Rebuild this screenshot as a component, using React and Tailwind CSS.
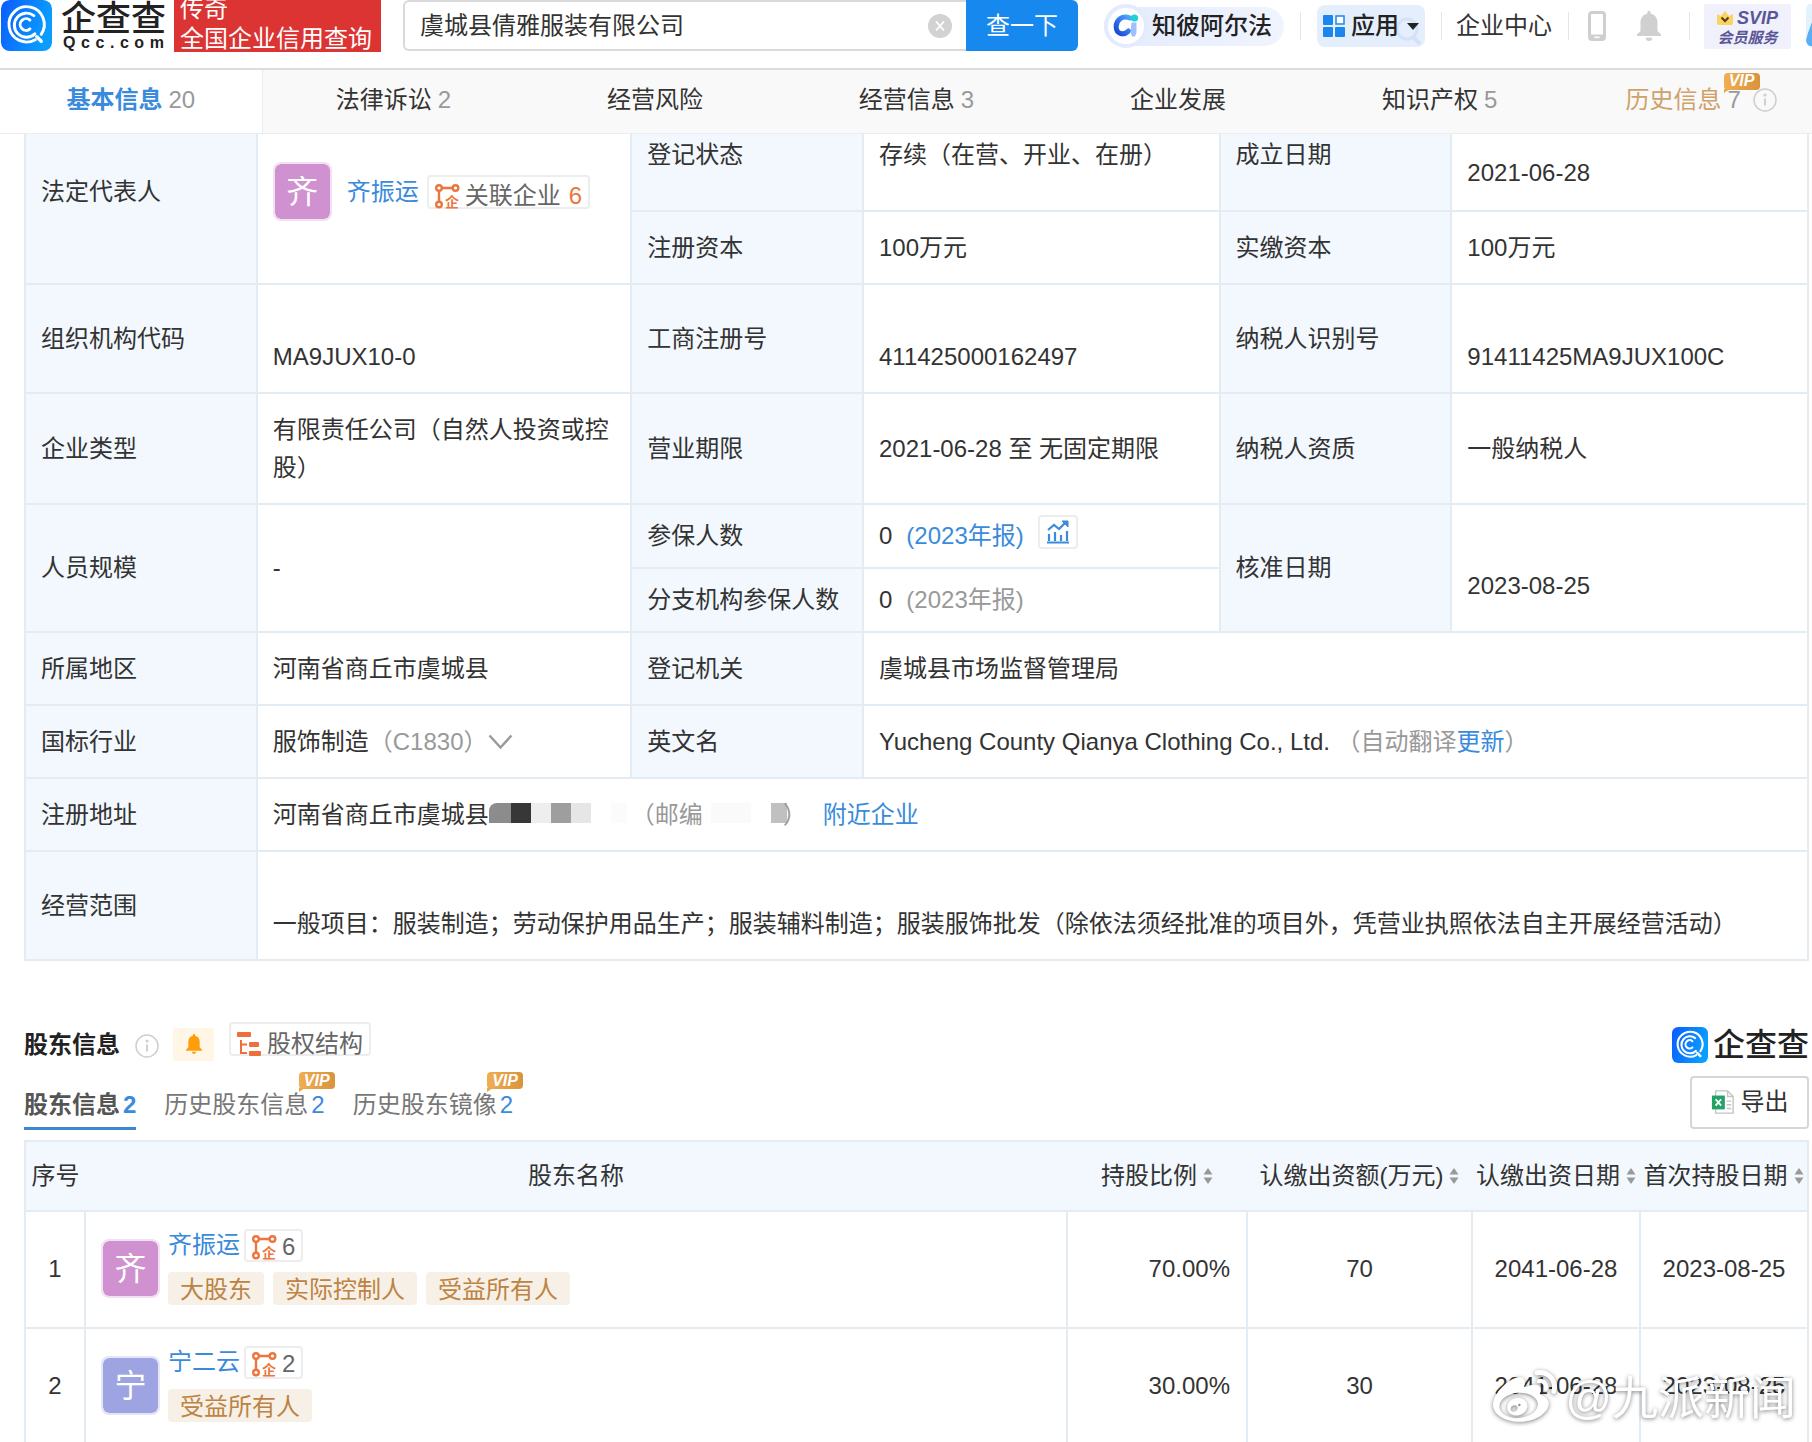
import React from "react";
import { FaWeibo } from "react-icons/fa";

const FONT = "font-['Liberation_Sans','Noto_Sans_CJK_SC',sans-serif]";

function LogoMark({ className }) {
  return (
    <svg viewBox="0 0 52 52" className={className} aria-hidden="true">
      <defs>
        <linearGradient id="qcc" x1="0" y1="0" x2="1" y2="0.3">
          <stop offset="0" stopColor="#0a5cff" />
          <stop offset="1" stopColor="#0a9dff" />
        </linearGradient>
      </defs>
      <rect width="52" height="52" rx="9" fill="url(#qcc)" />
      <g fill="none" stroke="#fff" strokeWidth="3" strokeLinecap="round">
        <path d="M35 40.5A18 18 0 1 1 41 35" />
        <path d="M34.5 34.5A12.300 12.300 0 1 1 33.500 16" />
        <path d="M29.500 29.500A6 6 0 1 1 29.500 20.500" />
        <path d="M36.500 37.500l4.500 4.500" strokeWidth="3.500" />
      </g>
    </svg>
  );
}

function AlphaIcon() {
  return (
    <svg viewBox="0 0 26 24" className="h-6 w-[26px]" aria-hidden="true">
      <defs>
        <linearGradient id="alpha" x1="0" y1="1" x2="1" y2="0">
          <stop offset="0" stopColor="#1745d8" />
          <stop offset="1" stopColor="#4fa8ff" />
        </linearGradient>
      </defs>
      <path d="M17 4C9 0.500 3 6.500 3.200 13c.2 7 7.500 9 12.300 4" fill="none" stroke="url(#alpha)" strokeWidth="5" strokeLinecap="round" />
      <path d="M18.500 8.500h5v10l-1.500 4h-3l-1.500-4z" fill="#9fc0fb" />
      <circle cx="21.500" cy="4" r="3.600" fill="#1fd0d4" />
    </svg>
  );
}

function RelationIcon() {
  return (
    <svg viewBox="0 0 24 24" className="h-6 w-6 shrink-0 overflow-visible" aria-hidden="true">
      <g fill="none" stroke="#ec7640" strokeWidth="2.400">
        <circle cx="4" cy="4" r="2.800" />
        <circle cx="20.500" cy="4" r="2.800" />
        <circle cx="4" cy="20.500" r="2.800" />
        <path d="M7 4h10.500M4 7v10.500" />
      </g>
      <text x="10" y="23" fontSize="14" fontWeight="bold" fill="#ec7640">企</text>
    </svg>
  );
}

function BellIcon({ className }) {
  return (
    <svg viewBox="0 0 24 30" className={className} fill="currentColor" aria-hidden="true">
      <path d="M12 0c1 0 1.700.7 1.700 1.700v1C18 3.500 20.500 7 20.500 11.500V20L24 23.500V25H0v-1.500L3.500 20v-8.500C3.500 7 6 3.500 10.300 2.700v-1C10.300.7 11 0 12 0z" />
      <path d="M8.800 26.800h6.400a3.200 3.200 0 0 1-6.400 0z" />
    </svg>
  );
}

function InfoIcon() {
  return (
    <svg viewBox="0 0 24 24" className="h-6 w-6 shrink-0" fill="none" stroke="#cfcfcf" strokeWidth="1.500" aria-hidden="true">
      <circle cx="12" cy="12" r="11" />
      <path d="M12 10.500v7" strokeWidth="2" />
      <circle cx="12" cy="7" r="0.800" fill="#cfcfcf" />
    </svg>
  );
}

function VipBadge() {
  return (
    <span className="absolute -top-2 left-full -ml-9 flex h-[17px] w-9 items-center justify-center rounded-sm bg-linear-to-r from-[#f0ae52] to-[#d9933c] text-base leading-4 font-bold text-white italic">
      VIP
      <svg viewBox="0 0 6 4" className="absolute top-4 left-0 h-1 w-1.5" aria-hidden="true">
        <path d="M0 0h6L0 4z" fill="#eba94e" />
      </svg>
    </span>
  );
}

function SortIcon() {
  return (
    <svg viewBox="0 0 10 16" className="h-4 w-2.5 shrink-0" fill="#999" aria-hidden="true">
      <path d="M5 0l4.500 6.500h-9zM5 16l4.500-6.500h-9z" />
    </svg>
  );
}

function Divider() {
  return <span className="h-7 w-px shrink-0 bg-[#e6e6e6]" />;
}

function Avatar({ char, tone }) {
  return (
    <span className={`flex h-[59px] w-[59px] shrink-0 items-center justify-center rounded-lg border-2 text-[32px] leading-none text-white ${tone}`}>
      {char}
    </span>
  );
}

const PINK = "border-[#f3e0f3] bg-[#cf91cf] bg-clip-padding";
const VIOLET = "border-[#e4e5f6] bg-[#9ea3e2] bg-clip-padding";

const TABS = [
  { name: "基本信息", count: 20, active: true },
  { name: "法律诉讼", count: 2 },
  { name: "经营风险" },
  { name: "经营信息", count: 3 },
  { name: "企业发展" },
  { name: "知识产权", count: 5 },
  { name: "历史信息", count: 7, vip: true },
];

function Header() {
  return (
    <header className="relative z-10 shrink-0 overflow-hidden bg-white">
      <div className="flex h-[70px] items-start border-b-2 border-[#dcdcdc]">
        <a href="#home" className="ml-px flex shrink-0 items-start gap-[9px]" aria-label="企查查">
          <LogoMark className="h-[51px] w-[51px]" />
          <span className="flex w-[105px] flex-col text-[#222]">
            <span className="text-[35px] leading-[37px] font-medium">企查查</span>
            <span className="flex justify-between px-0.5 text-base leading-3 font-bold">
              {"Qcc.com".split("").map((c, i) => (
                <span key={i}>{c}</span>
              ))}
            </span>
          </span>
        </a>
        <div className="ml-2 flex h-[52px] w-[207px] shrink-0 flex-col justify-end overflow-hidden bg-[#dc3333] pl-1.5 leading-[30px] text-white">
          <span>传奇</span>
          <span className="-mb-0.5">全国企业信用查询</span>
        </div>
        <form className="ml-[22px] flex h-[51px] min-w-0 flex-1" onSubmit={(e) => e.preventDefault()}>
          <div className="flex min-w-0 flex-1 items-center rounded-l-md border-2 border-r-0 border-[#d9d9d9] pr-3.5 pl-[15px]">
            <input aria-label="搜索企业" defaultValue="虞城县倩雅服装有限公司" className="min-w-0 flex-1 bg-transparent outline-none" />
            <button type="button" aria-label="清除" className="flex h-6 w-6 items-center justify-center rounded-full bg-[#d2d2d2]">
              <svg viewBox="0 0 10 10" className="h-2.5 w-2.5" stroke="#fff" strokeWidth="1.800" aria-hidden="true">
                <path d="M1 0.500l8 9M9 0.500l-8 9" />
              </svg>
            </button>
          </div>
          <button type="submit" className="w-28 shrink-0 rounded-r-md bg-[#1788ee] text-white">查一下</button>
        </form>
        <div className="ml-[26px] flex h-[52px] shrink-0 items-center">
          <a href="#alpha" className="flex h-[39px] items-center rounded-full bg-linear-to-r from-[#e3ebfc] to-[#f0f4fe] pr-3 font-medium text-[#222]">
            <span className="mr-1 flex h-11 w-11 items-center justify-center rounded-full border-4 border-[#e3ebfc] bg-white">
              <AlphaIcon />
            </span>
            知彼阿尔法
          </a>
          <span className="mx-4 flex"><Divider /></span>
          <button type="button" className="relative flex h-[42px] items-center rounded-lg bg-[#e5eefc] px-1.5 font-medium text-[#222]">
            <svg viewBox="0 0 30 32" className="absolute right-0.5 bottom-0 h-8 w-[30px]" fill="none" stroke="#d3e2f8" strokeWidth="3" aria-hidden="true">
              <circle cx="14" cy="14" r="10" />
              <path d="M20 22l7 7" strokeWidth="4" />
            </svg>
            <svg viewBox="0 0 22 22" className="mr-1.5 h-[22px] w-[22px]" fill="#1a86ee" aria-hidden="true">
              <rect width="10" height="10" rx="1" />
              <rect x="13" y="1" width="8" height="8" fill="#fff" stroke="#1a86ee" strokeWidth="1.500" />
              <rect y="12" width="10" height="10" rx="1" />
              <rect x="12" y="12" width="10" height="10" rx="1" />
            </svg>
            <span className="relative">应用</span>
            <svg viewBox="0 0 12 7" className="relative ml-2 h-[7px] w-3" fill="#222" aria-hidden="true">
              <path d="M0 0h12L6 7z" />
            </svg>
          </button>
          <span className="ml-4 flex"><Divider /></span>
          <a href="#center" className="mr-4 ml-3.5">企业中心</a>
          <Divider />
          <button type="button" aria-label="手机版" className="ml-[19px]">
            <svg viewBox="0 0 18 30" className="h-[30px] w-[18px]" aria-hidden="true">
              <rect x="1.500" y="1.500" width="15" height="27" rx="2.500" fill="#fff" stroke="#cfcfcf" strokeWidth="3" />
              <path d="M1 23.500h16V27a2 2 0 0 1-2 2H3a2 2 0 0 1-2-2z" fill="#cfcfcf" />
              <path d="M6.500 26.300h5" stroke="#fff" strokeWidth="1.500" />
            </svg>
          </button>
          <button type="button" aria-label="通知" className="mr-7 ml-[31px] text-[#d0d0d0]">
            <BellIcon className="h-[30px] w-6" />
          </button>
          <Divider />
          <a href="#svip" className="ml-3.5 flex h-[45px] w-[87px] flex-col items-center justify-center rounded-xs bg-[#f1f1fd] pt-1 font-bold text-[#5b5797] italic">
            <span className="flex items-center gap-1 text-lg leading-5">
              <svg viewBox="0 0 16 14" className="h-3.5 w-4" aria-hidden="true">
                <path d="M0 3l4 2 4-5 4 5 4-2v9a2 2 0 0 1-2 2H2a2 2 0 0 1-2-2z" fill="#f8d462" />
                <path d="M4.500 6.500L8 10l3.500-3.500" fill="none" stroke="#5a3d14" strokeWidth="2" />
              </svg>
              SVIP
            </span>
            <span className="text-[15px] leading-5">会员服务</span>
          </a>
          <svg viewBox="0 0 6 44" className="ml-[15px] h-11 w-1.5" aria-hidden="true">
            <path d="M6 0H3Q0 2 0 8v26q0 6 6 10z" fill="#e3f3fd" />
            <path d="M6 18Q2 28 0 36q1 7 6 6z" fill="#5aaef5" />
          </svg>
        </div>
      </div>
      <nav className="-mr-5 flex h-16 border-b border-[#e8edf0] bg-[#f9f9f9]">
        {TABS.map((t) => (
          <a
            key={t.name}
            href={`#${t.name}`}
            className={`flex flex-1 items-center justify-center gap-1.5 pb-1 ${t.active ? "border-r border-[#e8edf0] bg-white" : ""}`}
          >
            <span className={t.active ? "font-bold text-[#3a8bdb]" : t.vip ? "text-[#cfa26a]" : ""}>{t.name}</span>
            {t.count && (
              <span className="relative text-[#999]">
                {t.count}
                {t.vip && <span className="absolute top-0 left-8"><VipBadge /></span>}
              </span>
            )}
            {t.vip && <span className="ml-1.5"><InfoIcon /></span>}
          </a>
        ))}
      </nav>
    </header>
  );
}

const CELL = "border-2 border-[#e3ecf2] px-[15px] py-2 text-left font-normal";

function Label({ children, rows }) {
  return (
    <th scope="row" rowSpan={rows} className={`${CELL} bg-[#f2f8fd]`}>
      {children}
    </th>
  );
}

function Value({ children, rows, cols, low }) {
  return (
    <td rowSpan={rows} colSpan={cols} className={CELL}>
      <div className={low ? "pt-9" : ""}>{children}</div>
    </td>
  );
}

function Block({ tone }) {
  return <span className={`h-5 w-5 ${tone}`} />;
}

function CompanyTable() {
  return (
    <table className="w-full table-fixed border-collapse">
      <colgroup>
        <col className="w-[13%]" />
        <col className="w-[21%]" />
        <col className="w-[13%]" />
        <col className="w-[20%]" />
        <col className="w-[13%]" />
        <col className="w-[20%]" />
      </colgroup>
      <tbody>
        <tr className="h-28">
          <Label rows={2}>法定代表人</Label>
          <Value rows={2}>
            <div className="flex items-center">
              <Avatar char="齐" tone={PINK} />
              <a href="#person" className="ml-[15px] text-[#3a8bdb]">齐振运</a>
              <a href="#related" className="ml-2 flex h-[34px] items-center rounded-sm border-2 border-[#ededed] px-1.5 pt-2 text-[#666]">
                <RelationIcon />
                <span className="mr-2 ml-1.5">关联企业</span>
                <span className="text-[#ec7640]">6</span>
              </a>
            </div>
          </Value>
          <Label>登记状态</Label>
          <Value>存续（在营、开业、在册）</Value>
          <Label>成立日期</Label>
          <Value low>2021-06-28</Value>
        </tr>
        <tr className="h-[73px]">
          <Label>注册资本</Label>
          <Value>100万元</Value>
          <Label>实缴资本</Label>
          <Value>100万元</Value>
        </tr>
        <tr className="h-[109px]">
          <Label>组织机构代码</Label>
          <Value low>MA9JUX10-0</Value>
          <Label>工商注册号</Label>
          <Value low>411425000162497</Value>
          <Label>纳税人识别号</Label>
          <Value low>91411425MA9JUX100C</Value>
        </tr>
        <tr className="h-[111px]">
          <Label>企业类型</Label>
          <Value>有限责任公司（自然人投资或控股）</Value>
          <Label>营业期限</Label>
          <Value>2021-06-28 至 无固定期限</Value>
          <Label>纳税人资质</Label>
          <Value>一般纳税人</Value>
        </tr>
        <tr className="h-16">
          <Label rows={2}>人员规模</Label>
          <Value rows={2}>-</Value>
          <Label>参保人数</Label>
          <Value>
            <div className="flex items-center">
              0
              <a href="#report" className="ml-3.5 text-[#3a8bdb]">(2023年报)</a>
              <button type="button" aria-label="趋势" className="mb-2 ml-3.5 flex h-[34px] w-10 items-center justify-center rounded-sm border-2 border-[#ededed]">
                <svg viewBox="0 0 24 24" className="h-6 w-6" fill="none" stroke="#3a8bdb" strokeWidth="2.200" aria-hidden="true">
                  <path d="M1 22.500h22M3 21v-7M9 21v-9M15 21v-6M21 21v-10" />
                  <path d="M2 10l6-5 5 4 7-7" />
                  <path d="M16 1h6v6z" fill="#3a8bdb" strokeWidth="1" />
                </svg>
              </button>
            </div>
          </Value>
          <Label rows={2}>核准日期</Label>
          <Value rows={2} low>2023-08-25</Value>
        </tr>
        <tr className="h-16">
          <Label>分支机构参保人数</Label>
          <Value>
            0<span className="ml-3.5 text-[#999]">(2023年报)</span>
          </Value>
        </tr>
        <tr className="h-[73px]">
          <Label>所属地区</Label>
          <Value>河南省商丘市虞城县</Value>
          <Label>登记机关</Label>
          <Value cols={3}>虞城县市场监督管理局</Value>
        </tr>
        <tr className="h-[73px]">
          <Label>国标行业</Label>
          <Value>
            <div className="flex items-center">
              服饰制造<span className="text-[#999]">（C1830）</span>
              <button type="button" aria-label="展开">
                <svg viewBox="0 0 26 16" className="h-4 w-[26px]" fill="none" stroke="#999" strokeWidth="2.400" aria-hidden="true">
                  <path d="M1.500 1.500l11 12 11-12" />
                </svg>
              </button>
            </div>
          </Value>
          <Label>英文名</Label>
          <Value cols={3}>
            Yucheng County Qianya Clothing Co., Ltd. <span className="text-[#999]">（自动翻译<a href="#update" className="text-[#3a8bdb]">更新</a>）</span>
          </Value>
        </tr>
        <tr className="h-[73px]">
          <Label>注册地址</Label>
          <Value cols={5}>
            <div className="flex items-center">
              河南省商丘市虞城县
              <span className="mb-1 flex">
                <span className="h-5 w-[22px] rounded-tl-lg bg-[#8c8c8c]" />
                <Block tone="bg-[#373737]" />
                <Block tone="bg-[#eeeeee]" />
                <Block tone="bg-[#9e9e9e]" />
                <Block tone="bg-[#e6e6e6]" />
              </span>
              <span className="mb-1 ml-5 h-5 w-4 bg-[#fbfbfb]" />
              <span className="ml-1 text-[#999]">（邮编</span>
              <span className="mb-1 ml-2 h-5 w-10 bg-[#fafafa]" />
              <span className="mb-1 ml-5 h-5 w-4 bg-[#c0c0c0]" />
              <span className="-ml-1 text-[#999]">）</span>
              <a href="#nearby" className="ml-4 text-[#3a8bdb]">附近企业</a>
            </div>
          </Value>
        </tr>
        <tr className="h-[109px]">
          <Label>经营范围</Label>
          <Value cols={5} low>
            一般项目：服装制造；劳动保护用品生产；服装辅料制造；服装服饰批发（除依法须经批准的项目外，凭营业执照依法自主开展经营活动）
          </Value>
        </tr>
      </tbody>
    </table>
  );
}

const HOLDERS = [
  { no: 1, char: "齐", tone: PINK, name: "齐振运", related: 6, tags: ["大股东", "实际控制人", "受益所有人"], ratio: "70.00%", amount: 70, due: "2041-06-28", first: "2023-08-25" },
  { no: 2, char: "宁", tone: VIOLET, name: "宁二云", related: 2, tags: ["受益所有人"], ratio: "30.00%", amount: 30, due: "2041-06-28", first: "2023-08-25" },
];

function SortHead({ children }) {
  return (
    <th scope="col" className="border-y-2 border-[#e3ecf2] p-0 font-normal last:border-r-2">
      <button type="button" className="inline-flex items-center gap-1.5 whitespace-nowrap">
        {children}
        <SortIcon />
      </button>
    </th>
  );
}

function Shareholders() {
  const td = "border-2 border-[#e3ecf2] px-0 pt-0 pb-0.5 text-center";
  return (
    <section className="pt-[61px]">
      <div className="flex h-[46px] items-center">
        <h2 className="font-bold text-[#222]">股东信息</h2>
        <span className="mt-0.5 ml-[15px]"><InfoIcon /></span>
        <button type="button" aria-label="订阅" className="mb-0.5 ml-3.5 flex h-[33px] w-[41px] items-center justify-center rounded-xs bg-[#fff6e5] text-[#ff9d0a]">
          <BellIcon className="h-5 w-[18px]" />
        </button>
        <a href="#structure" className="mb-3 ml-[15px] flex h-[34px] items-center rounded-sm border-2 border-[#ededed] px-1.5 pt-2.5 text-[#666]">
          <svg viewBox="0 0 24 24" className="mr-1.5 h-6 w-6" fill="#ee6f3c" aria-hidden="true">
            <rect width="14" height="5" rx="1" />
            <rect x="12" y="10" width="10" height="5" rx="1" />
            <rect x="12" y="19" width="12" height="5" rx="1" />
            <path d="M3 8h2v12h5v2H3zM5 11.500h5v2H5z" />
          </svg>
          股权结构
        </a>
        <span className="ml-auto flex items-center gap-[5px] text-[32px] font-medium text-[#222]">
          <LogoMark className="h-9 w-9" />
          企查查
        </span>
      </div>
      <div className="flex h-[72px] items-start justify-between">
        <div className="flex h-[62px] items-end gap-7 text-[#777]">
          <button type="button" className="flex h-11 items-start gap-[3px] border-b-[3px] border-[#3a89d0] font-bold text-[#555]">
            股东信息<span className="text-[#3a8bdb]">2</span>
          </button>
          <button type="button" className="relative flex h-11 items-start gap-[3px]">
            历史股东信息<span className="text-[#3a8bdb]">2</span>
            <span className="absolute -top-1.5 left-full ml-2.5"><VipBadge /></span>
          </button>
          <button type="button" className="relative flex h-11 items-start gap-[3px]">
            历史股东镜像<span className="text-[#3a8bdb]">2</span>
            <span className="absolute -top-1.5 left-full ml-2.5"><VipBadge /></span>
          </button>
        </div>
        <button type="button" className="mt-2 flex h-[53px] w-[119px] items-center justify-center gap-1.5 rounded-sm border-2 border-[#d6d6d6] pb-0.5">
          <svg viewBox="0 0 24 26" className="h-6 w-6" aria-hidden="true">
            <path d="M4 1h13l6 6v18H4z" fill="#fff" stroke="#c4c4c4" strokeWidth="1.500" />
            <path d="M17 1v6h6" fill="none" stroke="#c4c4c4" strokeWidth="1.500" />
            <path d="M16 12h5M16 16h5M16 20h5" stroke="#c4c4c4" strokeWidth="1.500" />
            <rect y="6" width="14" height="15" fill="#21a366" />
            <path d="M4 10l6 7M10 10l-6 7" stroke="#fff" strokeWidth="2" />
          </svg>
          导出
        </button>
      </div>
      <table className="w-full table-fixed border-collapse">
        <colgroup>
          <col className="w-[60px]" />
          <col />
          <col className="w-[180px]" />
          <col className="w-[225px]" />
          <col className="w-[168px]" />
          <col className="w-[168px]" />
        </colgroup>
        <thead>
          <tr className="h-[70px] bg-[#f2f8fd]">
            <th scope="col" className="border-y-2 border-l-2 border-[#e3ecf2] p-0 font-normal">序号</th>
            <th scope="col" className="border-y-2 border-[#e3ecf2] p-0 font-normal">股东名称</th>
            <SortHead>持股比例</SortHead>
            <SortHead>认缴出资额(万元)</SortHead>
            <SortHead>认缴出资日期</SortHead>
            <SortHead>首次持股日期</SortHead>
          </tr>
        </thead>
        <tbody>
          {HOLDERS.map((h) => (
            <tr key={h.no} className="h-[117px]">
              <td className={td}>{h.no}</td>
              <td className={td}>
                <div className="flex items-center gap-2 pl-[15px]">
                  <Avatar char={h.char} tone={h.tone} />
                  <div className="mb-1 flex flex-col gap-2.5">
                    <div className="flex h-[33px] items-center gap-1">
                      <a href="#holder" className="text-[#3a8bdb]">{h.name}</a>
                      <a href="#related" className="flex h-[33px] items-center gap-1.5 rounded-sm border-2 border-[#ededed] px-1.5 pt-1 text-[#666]">
                        <RelationIcon />
                        {h.related}
                      </a>
                    </div>
                    <div className="flex gap-[9px]">
                      {h.tags.map((t) => (
                        <span key={t} className="flex h-[33px] items-center rounded-sm bg-[#f7f0e6] px-3 pt-1 text-[#bd8343]">{t}</span>
                      ))}
                    </div>
                  </div>
                </div>
              </td>
              <td className="border-2 border-[#e3ecf2] pt-0 pr-4 pb-0.5 pl-0 text-right">{h.ratio}</td>
              <td className={td}>{h.amount}</td>
              <td className={td}>{h.due}</td>
              <td className={td}>{h.first}</td>
            </tr>
          ))}
        </tbody>
      </table>
    </section>
  );
}

export default function App() {
  return (
    <div lang="zh-CN" className={`flex h-screen flex-col overflow-hidden bg-white text-2xl leading-[38px] text-[#333] ${FONT}`}>
      <Header />
      <main className="-mt-9 min-h-0 flex-1 overflow-y-auto pr-[3px] pl-6 [scrollbar-width:none]">
        <CompanyTable />
        <Shareholders />
      </main>
      <div className="pointer-events-none fixed right-4 bottom-3 z-20 flex items-center gap-2 text-[46px] leading-[54px] text-white drop-shadow-[0_1px_2px_rgba(0,0,0,0.5)]">
        <FaWeibo className="h-16 w-16" aria-hidden="true" />
        @九派新闻
      </div>
    </div>
  );
}
